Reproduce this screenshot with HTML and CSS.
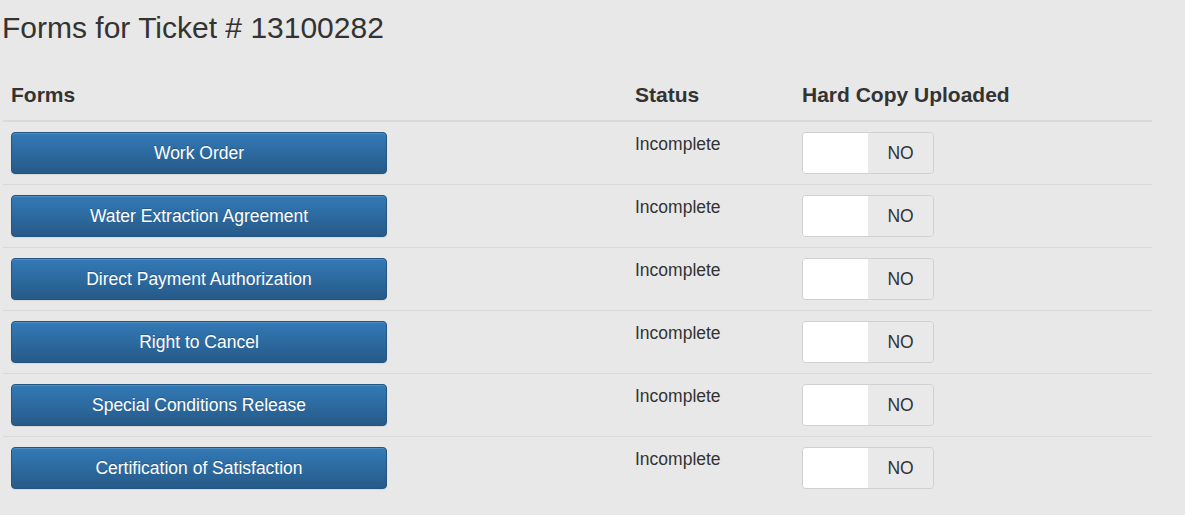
FILE: index.html
```html
<!DOCTYPE html>
<html>
<head>
<meta charset="utf-8">
<link rel="stylesheet" href="styles.css">
</head>
<body>
<h1 class="title">Forms for Ticket # 13100282</h1>
<table class="forms-table">
  <colgroup>
    <col class="col-forms">
    <col class="col-status">
    <col class="col-hard">
  </colgroup>
  <thead>
    <tr>
      <th>Forms</th>
      <th>Status</th>
      <th>Hard Copy Uploaded</th>
    </tr>
  </thead>
  <tbody>
    <tr>
      <td><button class="btn-form">Work Order</button></td>
      <td class="status">Incomplete</td>
      <td><div class="switch"><span class="switch-handle"></span><span class="switch-off">NO</span></div></td>
    </tr>
    <tr>
      <td><button class="btn-form">Water Extraction Agreement</button></td>
      <td class="status">Incomplete</td>
      <td><div class="switch"><span class="switch-handle"></span><span class="switch-off">NO</span></div></td>
    </tr>
    <tr>
      <td><button class="btn-form">Direct Payment Authorization</button></td>
      <td class="status">Incomplete</td>
      <td><div class="switch"><span class="switch-handle"></span><span class="switch-off">NO</span></div></td>
    </tr>
    <tr>
      <td><button class="btn-form">Right to Cancel</button></td>
      <td class="status">Incomplete</td>
      <td><div class="switch"><span class="switch-handle"></span><span class="switch-off">NO</span></div></td>
    </tr>
    <tr>
      <td><button class="btn-form">Special Conditions Release</button></td>
      <td class="status">Incomplete</td>
      <td><div class="switch"><span class="switch-handle"></span><span class="switch-off">NO</span></div></td>
    </tr>
    <tr>
      <td><button class="btn-form">Certification of Satisfaction</button></td>
      <td class="status">Incomplete</td>
      <td><div class="switch"><span class="switch-handle"></span><span class="switch-off">NO</span></div></td>
    </tr>
  </tbody>
</table>
</body>
</html>
```

FILE: styles.css
```css
html, body {
  margin: 0;
  padding: 0;
  background: #e8e8e8;
  color: #333;
  font-family: "Liberation Sans", Arial, sans-serif;
}

.title {
  margin: 11px 0 0 2px;
  font-size: 30px;
  font-weight: normal;
  line-height: 33px;
}

.forms-table {
  margin: 28px 0 0 3px;
  width: 1149px;
  border-collapse: collapse;
  table-layout: fixed;
}

.col-forms { width: 624px; }
.col-status { width: 167px; }

.forms-table th {
  text-align: left;
  font-size: 21px;
  font-weight: bold;
  line-height: 29px;
  padding: 8px 8px 11px 8px;
  border-bottom: 2px solid #d9d9d9;
}

.forms-table td {
  vertical-align: top;
  padding: 10px 8px;
  font-size: 17.5px;
  line-height: 25px;
  border-bottom: 1px solid #d9d9d9;
}

.forms-table tbody tr:last-child td {
  border-bottom: none;
}

.btn-form {
  display: block;
  width: 376px;
  height: 42px;
  margin: 0;
  padding: 0;
  border: 1px solid #245580;
  border-radius: 4px;
  background: linear-gradient(to bottom, #337ab7 0%, #265a88 100%);
  box-shadow: inset 0 1px 0 rgba(255, 255, 255, 0.15), 0 1px 1px rgba(0, 0, 0, 0.075);
  color: #fff;
  font-family: "Liberation Sans", Arial, sans-serif;
  font-size: 17.5px;
  text-align: center;
  text-shadow: 0 -1px 0 rgba(0, 0, 0, 0.2);
  cursor: pointer;
}

.status {
  color: #333;
}

.switch {
  display: flex;
  width: 132px;
  height: 42px;
  box-sizing: border-box;
  border: 1px solid #d0d0d0;
  border-radius: 4px;
  overflow: hidden;
  background: #e9e9e9;
}

.switch-handle {
  width: 65px;
  background: #fff;
}

.switch-off {
  flex: 1;
  display: flex;
  align-items: center;
  justify-content: center;
  font-size: 17.5px;
  color: #333;
  background: #e9e9e9;
}
```
